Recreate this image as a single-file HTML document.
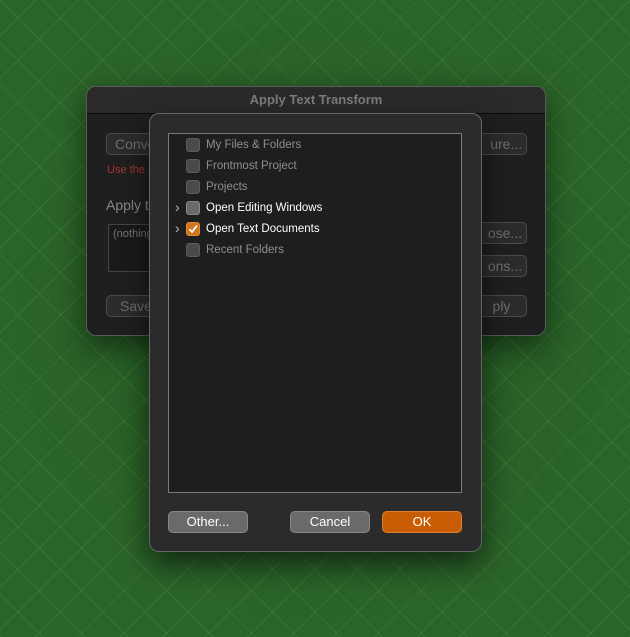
<!DOCTYPE html><html><head><style>
body{margin:0;width:630px;height:637px;overflow:hidden;position:relative;font-family:"Liberation Sans",sans-serif;
background-color:#2b6429;
background-image:repeating-linear-gradient(45deg,rgba(120,190,90,.16) 0 1px,transparent 1px 30px),repeating-linear-gradient(-45deg,rgba(120,190,90,.16) 0 1px,transparent 1px 30px),radial-gradient(circle at 50% 50%,rgba(20,60,20,.3),transparent 70%);}
.abs{position:absolute}
.back{left:86px;top:86px;width:458px;height:248px;background:#1f1f1f;border:1px solid #5a5a5a;border-radius:10px;box-shadow:0 10px 30px rgba(0,0,0,.5)}
.title{left:0;top:0;width:458px;height:26px;border-bottom:1px solid #0c0c0c;background:#2a2a2a;border-radius:10px 10px 0 0;color:#7c7c7c;font-weight:bold;font-size:13px;text-align:center;line-height:26px}
.bb{background:#2c2c2c;border:1px solid #4a4a4a;border-radius:5px;color:#6f6f6f;font-size:14px;line-height:20px;height:20px;box-sizing:content-box}
.front{left:149px;top:113px;width:331px;height:437px;background:#2b2b2b;border:1px solid #666;border-radius:10px;box-shadow:0 12px 30px rgba(0,0,0,.6)}
.list{left:18px;top:19px;width:292px;height:358px;background:#1e1e1e;border:1px solid #7a7a7a}
.row{position:absolute;left:0;height:16px;font-size:11.5px;color:#8f8f8f;line-height:16px;font-weight:500}
.cb{position:absolute;left:17px;top:1px;width:12px;height:12px;border-radius:3px;background:#4a4a4a;border:1px solid #5c5c5c}
.row span{position:absolute;left:37px;white-space:nowrap}
.w{color:#fff}
.chev{position:absolute;left:6px;top:-1px;color:#bbb;font-size:14px;font-weight:normal}
.btn{position:absolute;top:397px;width:78px;height:20px;border-radius:5px;font-size:13px;color:#fff;text-align:center;line-height:20px;background:#6a6a6a;border:1px solid #888}
</style></head><body>
<div class="abs back">
<div class="abs title">Apply Text Transform</div>
<div class="abs bb" style="left:19px;top:46px;width:90px;padding-left:8px">Conve</div>
<div class="abs bb" style="left:360px;top:46px;width:78px;text-align:right;padding-right:0">ure...&nbsp;</div>
<div class="abs" style="left:20px;top:77px;color:#a33;font-size:11px">Use the</div>
<div class="abs" style="left:19px;top:110px;color:#888;font-size:14px">Apply t</div>
<div class="abs" style="left:21px;top:137px;width:90px;height:48px;border:1px solid #444;background:#1a1a1a;color:#777;font-size:11px;padding:3px 4px;box-sizing:border-box">(nothing</div>
<div class="abs bb" style="left:360px;top:135px;width:78px;text-align:right">ose...&nbsp;</div>
<div class="abs bb" style="left:360px;top:168px;width:78px;text-align:right">ons...&nbsp;</div>
<div class="abs bb" style="left:19px;top:208px;width:90px;padding-left:13px">Save</div>
<div class="abs bb" style="left:360px;top:208px;width:78px;text-align:right">ply&nbsp;&nbsp;&nbsp;&nbsp;</div>
</div>
<div class="abs front">
<div class="abs list">
<div class="row" style="top:3px;width:290px"><i class="cb"></i><span>My Files &amp; Folders</span></div>
<div class="row" style="top:24px;width:290px"><i class="cb"></i><span>Frontmost Project</span></div>
<div class="row" style="top:45px;width:290px"><i class="cb"></i><span>Projects</span></div>
<div class="row w" style="top:66px;width:290px"><b class="chev">›</b><i class="cb" style="background:#6a6a6a;border-color:#888"></i><span>Open Editing Windows</span></div>
<div class="row w" style="top:87px;width:290px"><b class="chev">›</b><i class="cb" style="background:#d0741e;border-color:#e08a3a"><svg width="12" height="12" viewBox="0 0 12 12" style="position:absolute;left:0;top:0"><path d="M2.5 6.2 L5 9 L10 2.5" stroke="#fff" stroke-width="1.8" fill="none"/></svg></i><span>Open Text Documents</span></div>
<div class="row" style="top:108px;width:290px"><i class="cb"></i><span>Recent Folders</span></div>
</div>
<div class="btn" style="left:18px">Other...</div>
<div class="btn" style="left:140px">Cancel</div>
<div class="btn" style="left:232px;background:#c95d05;border-color:#e08030">OK</div>
</div>
</body></html>
